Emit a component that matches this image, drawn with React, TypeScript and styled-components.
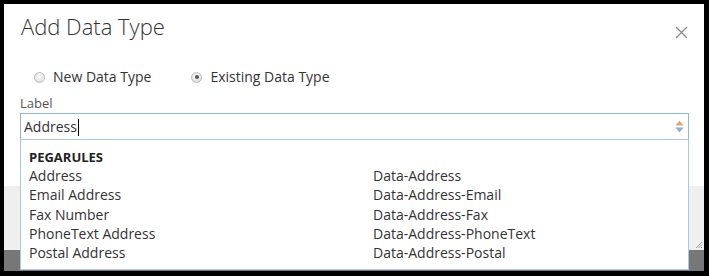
import React from "react";
import styled, { createGlobalStyle } from "styled-components";

const GlobalStyle = createGlobalStyle`
  html, body {
    margin: 0;
    padding: 0;
    background: #000;
  }
  * {
    box-sizing: border-box;
  }
`;

const Frame = styled.div`
  width: 709px;
  height: 276px;
  background: #000;
  padding: 4px 5px 5px 4px;
  font-family: "Open Sans", "Liberation Sans", sans-serif;
  color: #333;
`;

const Screen = styled.div`
  display: flex;
  flex-direction: column;
  height: 100%;
`;

const Dialog = styled.section`
  background: #fff;
  padding: 8px 16px 46px 16px;
`;

const Header = styled.div`
  display: flex;
  align-items: flex-start;
  justify-content: space-between;
`;

const Title = styled.h1`
  margin: 0 0 0 1px;
  font-size: 22px;
  font-weight: 300;
  line-height: 29px;
  color: #333;
`;

const CloseButton = styled.button`
  border: none;
  background: none;
  padding: 0;
  margin: 14px 0 0 0;
  width: 13px;
  height: 13px;
  display: flex;
  cursor: pointer;
`;

const RadioGroup = styled.div`
  display: flex;
  gap: 40px;
  margin-top: 26px;
  padding-left: 14px;
  height: 20px;
`;

const RadioOption = styled.label`
  display: flex;
  align-items: center;
  gap: 8px;
  font-size: 14px;
  line-height: 20px;
  color: #333;
`;

const RadioDot = styled.span<{ checked?: boolean }>`
  width: 11px;
  height: 11px;
  border-radius: 50%;
  border: 1px solid #bdbdbd;
  background: radial-gradient(circle at 50% 35%, #fafafa 0%, #d8d8d8 100%);
  display: flex;
  align-items: center;
  justify-content: center;
  &::after {
    content: "";
    width: 4px;
    height: 4px;
    border-radius: 50%;
    background: ${(p) => (p.checked ? "#555" : "transparent")};
  }
`;

const FieldLabel = styled.div`
  margin-top: 8px;
  font-size: 13px;
  line-height: 16px;
  color: #555;
`;

const InputWrap = styled.div`
  position: relative;
  margin-top: 2px;
  width: 669px;
`;

const Input = styled.div`
  height: 27px;
  border: 1px solid #8fb4e6;
  display: flex;
  align-items: center;
  justify-content: space-between;
  padding: 0 4px 0 3px;
  font-size: 14px;
  line-height: 25px;
  color: #333;
`;

const Caret = styled.span`
  display: inline-block;
  width: 1px;
  height: 17px;
  background: #000;
  vertical-align: -4px;
  margin-left: 1px;
`;

const Dropdown = styled.div`
  position: absolute;
  left: 0;
  top: 26px;
  width: 669px;
  height: 131px;
  background: #fff;
  border: 1px solid #a9c7ee;
  padding: 7px 8px 0 8px;
  display: grid;
  grid-template-columns: 344px 1fr;
  grid-template-rows: 19px;
  grid-auto-rows: 19.25px;
  z-index: 2;
`;

const GroupHeading = styled.div`
  grid-column: 1 / -1;
  font-size: 13px;
  font-weight: 700;
  line-height: 21px;
  color: #222;
`;

const Option = styled.div`
  font-size: 14px;
  line-height: 19.25px;
  color: #333;
  white-space: nowrap;
`;

const Footer = styled.div`
  height: 64px;
  background: #efefef;
  display: flex;
  justify-content: flex-end;
  align-items: flex-end;
  padding: 0 1px 1px 0;
`;

const Backdrop = styled.div`
  flex: 1;
  background: #777;
`;

const rows: [string, string][] = [
  ["Address", "Data-Address"],
  ["Email Address", "Data-Address-Email"],
  ["Fax Number", "Data-Address-Fax"],
  ["PhoneText Address", "Data-Address-PhoneText"],
  ["Postal Address", "Data-Address-Postal"],
];

const Spinner = () => (
  <svg width="9" height="13" viewBox="0 0 9 13">
    <path d="M4.5 0.5 L8.5 5.5 L0.5 5.5 Z" fill="#e2a57a" />
    <path d="M0.5 7.5 L8.5 7.5 L4.5 12.5 Z" fill="#8eaed0" />
  </svg>
);

const App = () => {
  return (
    <>
      <GlobalStyle />
      <Frame>
        <Screen>
          <Dialog>
            <Header>
              <Title>Add Data Type</Title>
              <CloseButton aria-label="Close">
                <svg width="13" height="13" viewBox="0 0 13 13">
                  <path
                    d="M1 1 L12 12 M12 1 L1 12"
                    stroke="#8c8c8c"
                    strokeWidth="1.3"
                  />
                </svg>
              </CloseButton>
            </Header>
            <RadioGroup>
              <RadioOption>
                <RadioDot />
                New Data Type
              </RadioOption>
              <RadioOption>
                <RadioDot checked />
                Existing Data Type
              </RadioOption>
            </RadioGroup>
            <FieldLabel>Label</FieldLabel>
            <InputWrap>
              <Input>
                <span>
                  Address
                  <Caret />
                </span>
                <Spinner />
              </Input>
              <Dropdown>
                <GroupHeading>PEGARULES</GroupHeading>
                {rows.map(([label, cls]) => (
                  <React.Fragment key={cls}>
                    <Option>{label}</Option>
                    <Option>{cls}</Option>
                  </React.Fragment>
                ))}
              </Dropdown>
            </InputWrap>
          </Dialog>
          <Footer>
            <svg width="8" height="8" viewBox="0 0 8 8">
              <path
                d="M7 1 L1 7 M7 3.5 L3.5 7 M7 6 L6 7"
                stroke="#999"
                strokeWidth="1"
              />
            </svg>
          </Footer>
          <Backdrop />
        </Screen>
      </Frame>
    </>
  );
};

export default App;
